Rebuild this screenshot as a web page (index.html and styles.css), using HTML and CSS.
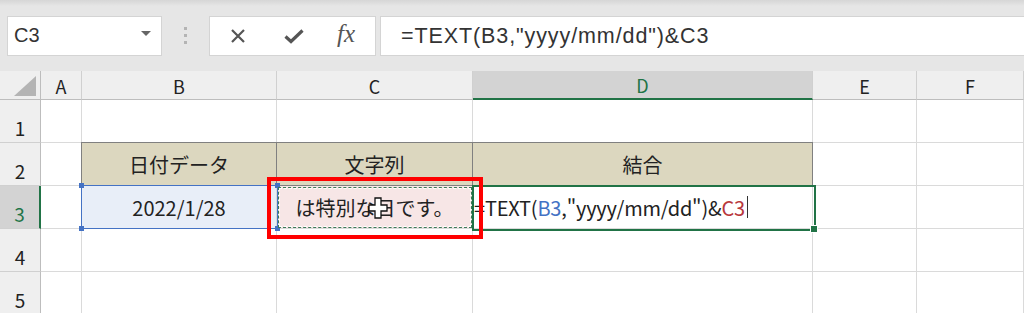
FILE: index.html
```html
<!DOCTYPE html>
<html lang="ja">

<head>
  <meta charset="UTF-8">
  <meta name="viewport" content="width=device-width, initial-scale=1.0">
  <title>TEXT関数で日付と文字列を結合</title>
  <link rel="stylesheet" href="styles.css">
</head>

<body>

  <div class="toolbar">
    <div class="name-box">
      <span>C3</span>
      <span class="drop-arrow"></span>
    </div>
    <div class="grip">
      <span></span><span></span><span></span>
    </div>
    <div class="fn-box">
      <svg class="fn-icon" width="16" height="16" viewBox="0 0 16 16">
        <path d="M2 2 L14 14 M14 2 L2 14" stroke="#555" stroke-width="2.2" fill="none" />
      </svg>
      <svg class="fn-icon" width="20" height="16" viewBox="0 0 20 16">
        <path d="M1.5 8.5 L7 13.5 L18.5 2.5" stroke="#555" stroke-width="3.2" fill="none" />
      </svg>
      <span class="fx">fx</span>
    </div>
    <div class="formula-input">=TEXT(B3,"yyyy/mm/dd")&amp;C3</div>
  </div>

  <div class="sheet">
    <!-- column headers -->
    <div class="hd corner"><span class="select-all"></span></div>
    <div class="hd col">A</div>
    <div class="hd col">B</div>
    <div class="hd col">C</div>
    <div class="hd col active-col">D</div>
    <div class="hd col">E</div>
    <div class="hd col">F</div>

    <!-- row 1 -->
    <div class="hd row">1</div>
    <div class="cell"></div>
    <div class="cell"></div>
    <div class="cell"></div>
    <div class="cell"></div>
    <div class="cell"></div>
    <div class="cell"></div>

    <!-- row 2 -->
    <div class="hd row">2</div>
    <div class="cell"></div>
    <div class="cell title first">日付データ</div>
    <div class="cell title">文字列</div>
    <div class="cell title last">結合</div>
    <div class="cell"></div>
    <div class="cell"></div>

    <!-- row 3 -->
    <div class="hd row active-row">3</div>
    <div class="cell"></div>
    <div class="cell val ref-blue">2022/1/28</div>
    <div class="cell val ref-red">は特別な日です。</div>
    <div class="cell edit">=TEXT(<span class="b-ref">B3</span>,"yyyy/mm/dd")&amp;<span class="c-ref">C3</span><span class="caret"></span></div>
    <div class="cell"></div>
    <div class="cell"></div>

    <!-- row 4 -->
    <div class="hd row">4</div>
    <div class="cell"></div>
    <div class="cell"></div>
    <div class="cell"></div>
    <div class="cell"></div>
    <div class="cell"></div>
    <div class="cell"></div>

    <!-- row 5 -->
    <div class="hd row">5</div>
    <div class="cell"></div>
    <div class="cell"></div>
    <div class="cell"></div>
    <div class="cell"></div>
    <div class="cell"></div>
    <div class="cell"></div>

    <!-- selection overlays -->
    <div class="sel-blue">
      <span class="knob tl"></span><span class="knob bl"></span>
      <span class="knob tr"></span><span class="knob br"></span>
    </div>
    <div class="sel-ants"></div>
    <div class="sel-green"><span class="fill-handle"></span></div>
    <div class="mark-red"></div>
    <svg class="cursor" width="20" height="22" viewBox="0 0 20 22">
      <path d="M7 1 H13 V8 H19 V14 H13 V21 H7 V14 H1 V8 H7 Z" fill="#fff" stroke="#111" stroke-width="1.3" />
    </svg>
  </div>

</body>

</html>
```

FILE: styles.css
```css
body {
  margin: 0;
  font-family: "Noto Sans CJK JP", "Noto Sans", sans-serif;
  background-color: #fff;
  overflow: hidden;
}

/* formula bar */
.toolbar {
  display: flex;
  align-items: center;
  height: 71px;
  padding-left: 7px;
  box-sizing: border-box;
  background-color: #e6e6e6;
  background-image: linear-gradient(#d6d6d6, #e6e6e6 6px);
}

.name-box {
  display: flex;
  align-items: center;
  justify-content: space-between;
  width: 155px;
  height: 40px;
  box-sizing: border-box;
  padding: 0 10px 0 6px;
  background-color: #fff;
  border: 1px solid #d4d4d4;
  font-family: "Liberation Sans", sans-serif;
  font-size: 20px;
  color: #333;
}

.drop-arrow {
  width: 0;
  height: 0;
  border-left: 5px solid transparent;
  border-right: 5px solid transparent;
  border-top: 5px solid #666;
  margin-bottom: 4px;
}

.grip {
  display: flex;
  flex-direction: column;
  align-items: center;
  gap: 4px;
  width: 47px;
}

.grip span {
  width: 3px;
  height: 3px;
  background-color: #b4b4b4;
}

.fn-box {
  display: flex;
  align-items: center;
  width: 167px;
  height: 40px;
  box-sizing: border-box;
  padding-left: 20px;
  background-color: #fff;
  border: 1px solid #d4d4d4;
}

.fn-icon {
  display: block;
}

.fn-icon + .fn-icon {
  margin-left: 38px;
}

.fx {
  margin-left: 33px;
  font-family: "Liberation Serif", serif;
  font-style: italic;
  font-size: 25px;
  color: #555;
  margin-bottom: 3px;
}

.formula-input {
  flex: 1;
  height: 40px;
  margin-left: 4px;
  box-sizing: border-box;
  padding-left: 20px;
  background-color: #fff;
  border: 1px solid #d4d4d4;
  border-right: none;
  font-family: "Liberation Sans", sans-serif;
  font-size: 21.5px;
  letter-spacing: 0.9px;
  line-height: 38px;
  color: #333;
}

/* grid */
.sheet {
  position: relative;
  display: grid;
  grid-template-columns: 41px 41px 195px 196px 340px 104px 107px;
  grid-template-rows: 29px repeat(5, 43px);
}

.cell,
.hd {
  box-sizing: border-box;
  border-right: 1px solid #dadada;
  border-bottom: 1px solid #dadada;
  display: flex;
  align-items: center;
  justify-content: center;
}

.hd {
  background-color: #efefef;
  color: #222;
  border-color: #d0d0d0;
}

.col {
  font-size: 18px;
  border-bottom-color: #bdbdbd;
  padding-top: 1px;
}

.row {
  font-size: 19px;
  align-items: flex-end;
  padding-bottom: 1px;
  border-right-color: #bdbdbd;
}

.corner {
  position: relative;
  border-bottom-color: #bdbdbd;
  border-right-color: #bdbdbd;
}

.select-all {
  position: absolute;
  right: 4px;
  bottom: 3px;
  width: 0;
  height: 0;
  border-left: 22px solid transparent;
  border-bottom: 20px solid #b4b4b4;
}

.active-col {
  background-color: #d3d3d3;
  color: #217346;
  border-bottom: 2px solid #217346;
}

.active-row {
  background-color: #d3d3d3;
  color: #217346;
  border-right: 2px solid #217346;
}

.title {
  background-color: #dcd7bf;
  border-top: 1px solid #808080;
  border-right: 1px solid #808080;
  border-bottom: 1px solid #808080;
  margin-top: -1px;
  font-size: 20px;
  color: #222;
}

.title.first {
  border-left: 1px solid #808080;
  margin-left: -1px;
}

.val {
  font-size: 20px;
  color: #222;
}

.ref-blue {
  background-color: #e8eef8;
}

.ref-red {
  background-color: #f7e6e6;
}

.edit {
  justify-content: flex-start;
  padding-left: 1px;
  font-size: 20px;
  color: #222;
  letter-spacing: -0.2px;
}

.b-ref {
  color: #4472c4;
}

.c-ref {
  color: #b8383c;
}

.caret {
  display: inline-block;
  width: 1px;
  height: 22px;
  margin-left: 2px;
  background-color: #333;
}

/* overlays */
.sel-blue {
  position: absolute;
  left: 81px;
  top: 114px;
  width: 197px;
  height: 44px;
  box-sizing: border-box;
  border: 1px solid #4472c4;
}

.knob {
  position: absolute;
  width: 5px;
  height: 5px;
  background-color: #4472c4;
}

.knob.tl { left: -3px; top: -3px; }
.knob.bl { left: -3px; bottom: -3px; }
.knob.tr { right: -3px; top: -3px; }
.knob.br { right: -3px; bottom: -3px; }

.sel-ants {
  position: absolute;
  left: 278px;
  top: 116px;
  width: 194px;
  height: 41px;
  box-sizing: border-box;
  border: 1px dashed #3d7a58;
  outline: 1px dashed #fff;
  outline-offset: -2px;
}

.sel-green {
  position: absolute;
  left: 472px;
  top: 114px;
  width: 344px;
  height: 46px;
  box-sizing: border-box;
  border: 2px solid #217346;
}

.fill-handle {
  position: absolute;
  right: -4px;
  bottom: -4px;
  width: 6px;
  height: 6px;
  background-color: #217346;
  border: 1px solid #fff;
}

.mark-red {
  position: absolute;
  left: 267px;
  top: 106px;
  width: 216px;
  height: 62px;
  box-sizing: border-box;
  border: 4px solid #ff0000;
}

.cursor {
  position: absolute;
  left: 368px;
  top: 126px;
}
```
